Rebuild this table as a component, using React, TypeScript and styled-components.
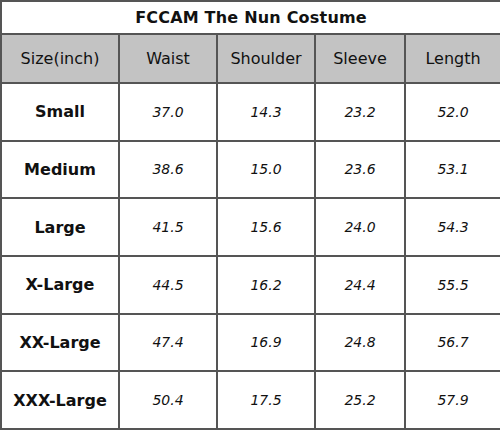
import styled, { createGlobalStyle } from "styled-components";

const GlobalStyle = createGlobalStyle`
  html, body {
    margin: 0;
    padding: 0;
    background: #ffffff;
  }
`;

const Table = styled.table`
  width: 500px;
  height: 430px;
  border-collapse: collapse;
  table-layout: fixed;
  font-family: "Comic Sans MS", "DejaVu Sans", sans-serif;
  color: #111;
  background: #fff;
`;

const Title = styled.th`
  height: 31px;
  border: 2px solid #555;
  font-size: 16px;
  font-weight: bold;
  letter-spacing: 0.2px;
  padding: 0;
`;

const HeadCell = styled.th`
  height: 47px;
  background: #c3c3c3;
  border: 2px solid #555;
  font-size: 16px;
  font-weight: normal;
  padding: 0;
`;

const LabelCell = styled.td`
  border: 2px solid #555;
  text-align: center;
  font-size: 16px;
  font-weight: bold;
  padding: 0;
`;

const ValueCell = styled.td`
  border: 2px solid #555;
  text-align: center;
  font-family: "DejaVu Sans", sans-serif;
  font-style: italic;
  font-size: 14px;
  padding: 0;
`;

const headers = ["Size(inch)", "Waist", "Shoulder", "Sleeve", "Length"];
const widths = [118, 98, 98, 90, 96];

const rows: [string, string[]][] = [
  ["Small", ["37.0", "14.3", "23.2", "52.0"]],
  ["Medium", ["38.6", "15.0", "23.6", "53.1"]],
  ["Large", ["41.5", "15.6", "24.0", "54.3"]],
  ["X-Large", ["44.5", "16.2", "24.4", "55.5"]],
  ["XX-Large", ["47.4", "16.9", "24.8", "56.7"]],
  ["XXX-Large", ["50.4", "17.5", "25.2", "57.9"]],
];

function App() {
  return (
    <>
      <GlobalStyle />
      <Table>
        <colgroup>
          {widths.map((w, i) => (
            <col key={i} style={{ width: w }} />
          ))}
        </colgroup>
        <thead>
          <tr>
            <Title colSpan={5}>FCCAM The Nun Costume</Title>
          </tr>
          <tr>
            {headers.map((h) => (
              <HeadCell key={h}>{h}</HeadCell>
            ))}
          </tr>
        </thead>
        <tbody>
          {rows.map(([label, vals]) => (
            <tr key={label}>
              <LabelCell>{label}</LabelCell>
              {vals.map((v, i) => (
                <ValueCell key={i}>{v}</ValueCell>
              ))}
            </tr>
          ))}
        </tbody>
      </Table>
    </>
  );
}

export default App;
